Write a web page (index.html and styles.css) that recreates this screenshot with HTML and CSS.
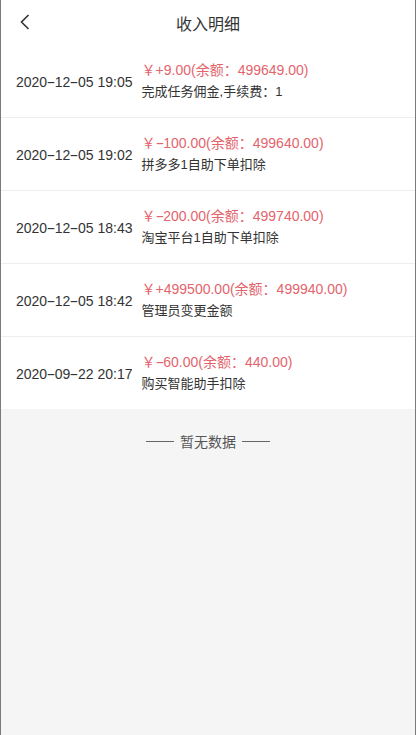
FILE: index.html
```html
<!DOCTYPE html>
<html lang="zh-CN">
<head>
<meta charset="utf-8">
<title>收入明细</title>
<link rel="stylesheet" href="styles.css">
</head>
<body>
<div class="page">
  <header class="nav">
    <span class="back">
      <svg width="12" height="16" viewBox="0 0 12 16"><path d="M9.5 1 L2.5 8 L9.5 15" fill="none" stroke="#333" stroke-width="1.6"/></svg>
    </span>
    <h1 class="title">收入明细</h1>
  </header>
  <ul class="list">
    <li class="row">
      <span class="date">2020<span class="hy">-</span>12<span class="hy">-</span>05 19:05</span>
      <div class="info">
        <div class="amount">￥+9.00(余额：499649.00)</div>
        <div class="desc">完成任务佣金,手续费：1</div>
      </div>
    </li>
    <li class="row">
      <span class="date">2020<span class="hy">-</span>12<span class="hy">-</span>05 19:02</span>
      <div class="info">
        <div class="amount">￥<span class="hy">-</span>100.00(余额：499640.00)</div>
        <div class="desc">拼多多1自助下单扣除</div>
      </div>
    </li>
    <li class="row">
      <span class="date">2020<span class="hy">-</span>12<span class="hy">-</span>05 18:43</span>
      <div class="info">
        <div class="amount">￥<span class="hy">-</span>200.00(余额：499740.00)</div>
        <div class="desc">淘宝平台1自助下单扣除</div>
      </div>
    </li>
    <li class="row">
      <span class="date">2020<span class="hy">-</span>12<span class="hy">-</span>05 18:42</span>
      <div class="info">
        <div class="amount">￥+499500.00(余额：499940.00)</div>
        <div class="desc">管理员变更金额</div>
      </div>
    </li>
    <li class="row">
      <span class="date">2020<span class="hy">-</span>09<span class="hy">-</span>22 20:17</span>
      <div class="info">
        <div class="amount">￥<span class="hy">-</span>60.00(余额：440.00)</div>
        <div class="desc">购买智能助手扣除</div>
      </div>
    </li>
  </ul>
  <div class="empty"><span class="dash"></span><span>暂无数据</span><span class="dash"></span></div>
</div>
</body>
</html>
```
FILE: styles.css
```css
html, body {
  margin: 0;
  padding: 0;
  height: 100%;
}
body {
  font-family: "Liberation Sans", "Noto Sans CJK SC", sans-serif;
  color: #333;
  background: #f5f5f5;
}
.page {
  min-height: 735px;
  box-sizing: border-box;
  border-left: 1px solid #7a7a7a;
  border-right: 1px solid #7a7a7a;
  background: #f5f5f5;
}
.nav {
  height: 45px;
  background: #fff;
  display: flex;
  align-items: center;
  justify-content: center;
  position: relative;
}
.back {
  position: absolute;
  left: 18px;
  top: 14px;
  display: flex;
}
.title {
  margin: 0;
  font-size: 16px;
  font-weight: normal;
  color: #333;
  font-family: "Noto Sans CJK SC", sans-serif;
}
.list {
  list-style: none;
  margin: 0;
  padding: 0;
  background: #fff;
}
.row {
  height: 72px;
  display: flex;
  align-items: center;
  padding-left: 15px;
  gap: 9px;
  border-bottom: 1px solid #eeeeee;
}
.row:last-child {
  border-bottom: none;
}
.date {
  font-size: 14px;
  color: #333;
  margin-top: 2px;
  white-space: nowrap;
}
.hy {
  display: inline-block;
  padding: 0 1.5px;
  transform: scaleX(1.9);
}
.info {
  display: flex;
  flex-direction: column;
}
.amount {
  font-size: 14px;
  color: #e4646c;
  line-height: 21px;
  white-space: nowrap;
}
.desc {
  font-size: 13px;
  color: #333;
  line-height: 21px;
}
.empty {
  display: flex;
  align-items: center;
  justify-content: center;
  gap: 6px;
  padding-top: 22px;
  font-size: 14px;
  color: #555;
  font-family: "Noto Sans CJK SC", sans-serif;
}
.dash {
  width: 28px;
  height: 1px;
  background: #666;
}
```
